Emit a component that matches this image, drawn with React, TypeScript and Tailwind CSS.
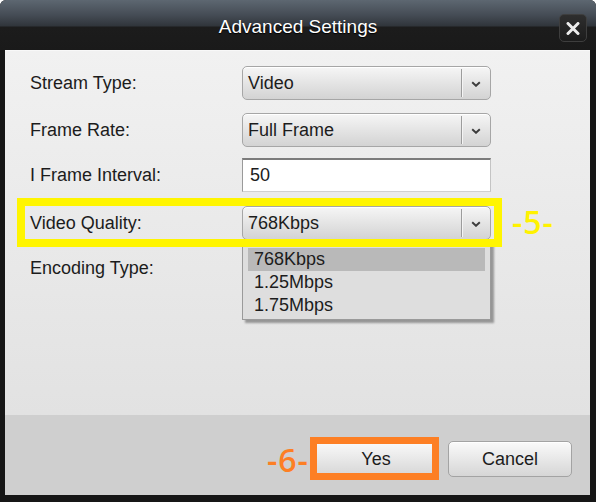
import { ReactNode } from "react";

const font = { fontFamily: '"Liberation Sans", Arial, sans-serif' };
const noteFont = { fontFamily: '"Open Sans", sans-serif', lineHeight: "44px" };

const Chevron = () => (
  <svg width="10" height="6" viewBox="0 0 10 6" fill="none">
    <path d="M1.2 1.2 L5 4.8 L8.8 1.2" stroke="#3c3c3c" strokeWidth="1.9" />
  </svg>
);

const Select = ({ value }: { value: string }) => (
  <div className="flex h-[34px] w-[249px] items-center rounded-[5px] border border-[#a6a6a6] bg-gradient-to-b from-[#f6f6f6] to-[#d3d3d3] shadow-[inset_0_1px_0_#ffffff]">
    <span className="flex-1 pl-[5px] text-[18px] text-[#1c1c1c]">{value}</span>
    <div className="h-[28px] w-px bg-[#9c9c9c] shadow-[1px_0_0_#f4f4f4]" />
    <div className="flex w-[28px] items-center justify-center pt-[2px]">
      <Chevron />
    </div>
  </div>
);

const Row = ({ label, className, children }: { label: string; className?: string; children?: ReactNode }) => (
  <div className={`flex h-[34px] items-center ${className ?? ""}`}>
    <span className="w-[212px] text-[18px] text-[#1c1c1c]">{label}</span>
    {children}
  </div>
);

const Button = ({ label }: { label: string }) => (
  <button className="flex h-[36px] w-[124px] items-center justify-center rounded-[5px] border border-[#a3a3a3] bg-gradient-to-b from-[#fafafa] to-[#d6d6d6] text-[18px] text-[#1c1c1c] shadow-[inset_0_1px_0_#ffffff]">
    {label}
  </button>
);

export default function App() {
  return (
    <div className="h-[502px] w-[596px] bg-white" style={font}>
      <div className="flex h-full w-full flex-col overflow-hidden rounded-t-[6px] bg-[#161616]">
        {/* Title bar */}
        <div className="relative flex h-[50px] items-center justify-center bg-[linear-gradient(to_bottom,#5d6771_0%,#454c55_30%,#30353b_52%,#1c1c1c_54%,#1a1a1a_100%)]">
          <span className="pt-[5px] text-[19px] text-white [text-shadow:0_1px_1px_#000]">Advanced Settings</span>
          <div className="absolute right-[9px] top-[14px] flex h-[28px] w-[28px] items-center justify-center rounded-[5px] border border-[#3e3e3e] bg-gradient-to-b from-[#2e2e2e] to-[#1c1c1c]">
            <svg width="14" height="13" viewBox="0 0 14 13">
              <path d="M2 1.5 L12 11.5 M12 1.5 L2 11.5" stroke="#ececec" strokeWidth="3" strokeLinecap="round" />
            </svg>
          </div>
        </div>

        {/* Body */}
        <div className="ml-[5px] mr-[6px] flex flex-col">
          <div className="relative h-[365px] border-t border-[#f8f8f8] bg-gradient-to-b from-[#f1f1f1] to-[#e2e2e2] pl-[25px] pt-[15px]">
            <Row label="Stream Type:">
              <Select value="Video" />
            </Row>
            <Row label="Frame Rate:" className="mt-[13px]">
              <Select value="Full Frame" />
            </Row>
            <Row label="I Frame Interval:" className="mt-[11px]">
              <div className="flex h-[34px] w-[249px] items-center border-l border-r border-b border-t-2 border-b-[#d0d0d0] border-l-[#9a9a9a] border-r-[#c4c4c4] border-t-[#7c7c7c] bg-white pl-[7px] text-[18px] text-[#1c1c1c]">
                50
              </div>
            </Row>
            <Row label="Video Quality:" className="mt-[14px]">
              <Select value="768Kbps" />
            </Row>
            <Row label="Encoding Type:" className="mt-[11px]" />

            {/* Open dropdown list */}
            <div className="absolute left-[237px] top-[190px] h-[79px] w-[249px] border border-[#9a9a9a] bg-[#dedede] px-[5px] pt-[6px] shadow-[3px_3px_2px_rgba(0,0,0,0.35)]">
              {["768Kbps", "1.25Mbps", "1.75Mbps"].map((item, i) => (
                <div
                  key={item}
                  className={`flex h-[23px] items-center pl-[6px] text-[18px] text-[#1c1c1c] ${i === 0 ? "bg-[#b9b9b9]" : ""}`}
                >
                  {item}
                </div>
              ))}
            </div>

            {/* Annotation -5- */}
            <div className="pointer-events-none absolute left-[12px] top-[147px] h-[49px] w-[485px] border-[8px] border-[#fff500]" />
            <span className="absolute left-[507px] top-[149px] text-[32px] font-semibold tracking-[1px] text-[#fff200]" style={noteFont}>
              -5-
            </span>
          </div>

          {/* Footer */}
          <div className="flex h-[80px] items-start justify-end gap-[10px] bg-[#cfcfcf] pr-[18px] pt-[26px]">
            <div className="relative">
              <Button label="Yes" />
              <div className="pointer-events-none absolute -bottom-[3px] -left-[4px] -right-[1px] -top-[4px] border-[7px] border-[#fd7f24]" />
              <span className="absolute -left-[47px] -top-[3px] text-[32px] font-semibold tracking-[1px] text-[#fd7f24]" style={noteFont}>
                -6-
              </span>
            </div>
            <Button label="Cancel" />
          </div>
        </div>
      </div>
    </div>
  );
}
